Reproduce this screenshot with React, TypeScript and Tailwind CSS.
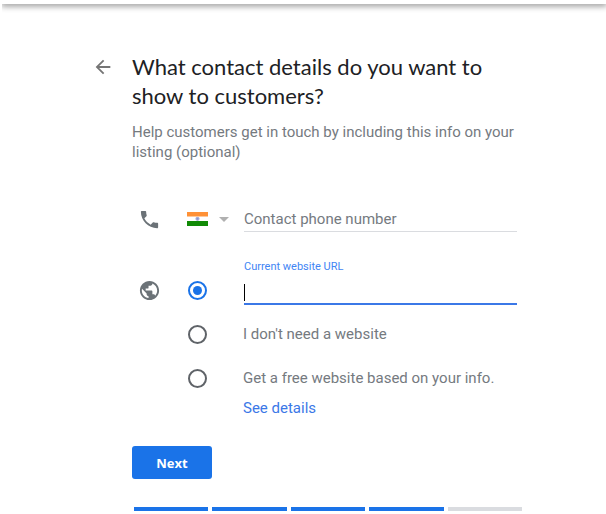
import { useState } from 'react';
import { MdArrowBack, MdPhone, MdPublic } from 'react-icons/md';

const TOTAL_STEPS = 5;
const CURRENT_STEP = 4;

function IndiaFlag() {
  return (
    <svg viewBox="0 0 21 14" className="h-[14px] w-[21px]" aria-hidden="true">
      <rect width="21" height="14" fill="#fff" />
      <rect width="21" height="4.5" fill="#ff9136" />
      <rect y="9" width="21" height="5" fill="#118a06" />
      <circle cx="10.5" cy="6.8" r="2.1" fill="#a9b2dc" />
      <circle cx="10.5" cy="6.8" r="1" fill="#8995d0" />
    </svg>
  );
}

function SiteRadio({
  id, checked, onSelect, label,
}: {
  id: string; checked: boolean; onSelect: () => void; label?: string;
}) {
  return (
    <input
      type="radio"
      id={id}
      name="site"
      aria-label={label}
      checked={checked}
      onChange={onSelect}
      className="grid size-[19px] shrink-0 cursor-pointer appearance-none place-content-center rounded-full border-2 border-[#5f6368] bg-white before:size-[9px] before:rounded-full before:bg-transparent checked:border-[#1a73e8] checked:before:bg-[#1a73e8] focus:outline-none"
    />
  );
}

export default function App() {
  const [site, setSite] = useState('current');
  const [phone, setPhone] = useState('');
  const [url, setUrl] = useState('');

  return (
    <div className="bg-white font-['Roboto',sans-serif] text-[15px] leading-5 text-[#757a7f]">
      <header className="ml-0.5 h-1 bg-white shadow-[0_1px_6px_1px_rgba(0,0,0,0.45)] [clip-path:inset(0_0_-12px_0)]" />

      <main className="pl-2 pt-12">
        <div className="mx-auto grid max-w-[430px] grid-cols-[22px_1fr] gap-x-[18px]">
          <button type="button" aria-label="Back" className="mt-1 h-[22px] cursor-pointer">
            <MdArrowBack size={22} className="text-[#757575]" />
          </button>

          <form onSubmit={(e) => e.preventDefault()}>
            <h1 className="font-['Lato',sans-serif] text-[22px] leading-[29px] text-[#202124]">
              What contact details do you want to show to customers?
            </h1>
            <p className="mt-3">
              Help customers get in touch by including this info on your listing (optional)
            </p>

            <div className="pl-1.5 pr-[5px]">
              {/* Phone */}
              <div className="mt-11 flex items-center">
                <MdPhone size={23} className="mr-[26px] shrink-0 text-[#6b7277]" />
                <button type="button" aria-label="Country code: India" className="flex w-[57px] shrink-0 cursor-pointer items-center gap-[11px]">
                  <IndiaFlag />
                  <svg viewBox="0 0 10 5" className="h-[5px] w-[10px]" aria-hidden="true">
                    <path d="M0 0h10L5 5z" fill="#b0b0b0" />
                  </svg>
                </button>
                <input
                  type="tel"
                  aria-label="Contact phone number"
                  placeholder="Contact phone number"
                  value={phone}
                  onChange={(e) => setPhone(e.target.value)}
                  className="h-[26px] min-w-0 flex-1 border-b border-[#dadce0] placeholder:text-[#757a7f] focus:outline-none"
                />
              </div>

              {/* Website */}
              <div className="mt-[27px] flex items-center">
                <MdPublic size={23} className="mr-[26px] shrink-0 text-[#6b7277]" />
                <div className="flex w-[57px] shrink-0 pl-px">
                  <SiteRadio
                    id="site-current"
                    label="Use current website"
                    checked={site === 'current'}
                    onSelect={() => setSite('current')}
                  />
                </div>
                <div className="flex min-w-0 flex-1 flex-col pb-4">
                  <label htmlFor="site-url" className="text-[11px] leading-4 text-[#4285f4]">
                    Current website URL
                  </label>
                  <div className="relative">
                    <input
                      id="site-url"
                      type="url"
                      value={url}
                      onChange={(e) => setUrl(e.target.value)}
                      className="h-[30px] w-full border-b-2 border-[#3b78e7] pt-1 caret-transparent focus:outline-none"
                    />
                    {url === '' && <span className="pointer-events-none absolute bottom-1 left-0 h-[17px] w-px bg-black" />}
                  </div>
                </div>
              </div>

              <div className="mt-[3px] flex items-center pl-[50px]">
                <SiteRadio id="site-none" checked={site === 'none'} onSelect={() => setSite('none')} />
                <label htmlFor="site-none" className="ml-9 cursor-pointer">I don't need a website</label>
              </div>

              <div className="mt-6 flex items-center pl-[50px]">
                <SiteRadio id="site-free" checked={site === 'free'} onSelect={() => setSite('free')} />
                <label htmlFor="site-free" className="ml-9 cursor-pointer">Get a free website based on your info.</label>
              </div>
              <a href="#details" className="ml-[105px] mt-2.5 inline-block text-[#3b78e7]">
                See details
              </a>
            </div>

            <button
              type="submit"
              className="mt-7 block h-[33px] w-20 cursor-pointer rounded-[3px] bg-[#1a73e8] font-['Open_Sans',sans-serif] text-[13px] font-bold text-white"
            >
              Next
            </button>

            <div
              role="progressbar"
              aria-label="Setup progress"
              aria-valuemin={0}
              aria-valuemax={TOTAL_STEPS}
              aria-valuenow={CURRENT_STEP}
              className="mt-7 flex gap-1 pl-0.5"
            >
              {Array.from({ length: TOTAL_STEPS }, (_, i) => (
                <span key={i} className={`h-1 flex-1 ${i < CURRENT_STEP ? 'bg-[#1a73e8]' : 'bg-[#dadce0]'}`} />
              ))}
            </div>
          </form>
        </div>
      </main>
    </div>
  );
}
